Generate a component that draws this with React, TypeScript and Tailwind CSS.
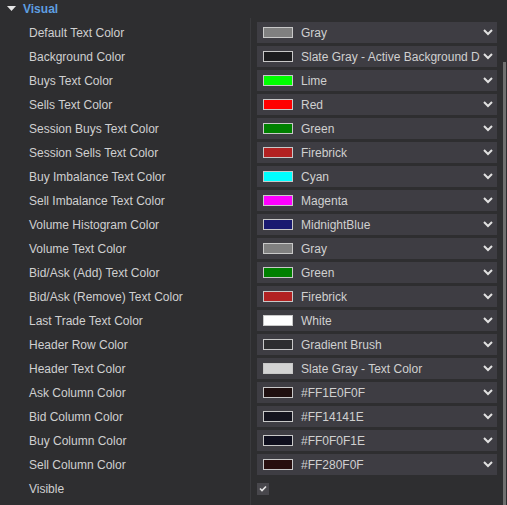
import React from "react";

type Row = { label: string; value: string; swatch: string };

const rows: Row[] = [
  { label: "Default Text Color", value: "Gray", swatch: "#808080" },
  { label: "Background Color", value: "Slate Gray - Active Background D", swatch: "#1c1c1e" },
  { label: "Buys Text Color", value: "Lime", swatch: "#00ff00" },
  { label: "Sells Text Color", value: "Red", swatch: "#ff0000" },
  { label: "Session Buys Text Color", value: "Green", swatch: "#008000" },
  { label: "Session Sells Text Color", value: "Firebrick", swatch: "#b22222" },
  { label: "Buy Imbalance Text Color", value: "Cyan", swatch: "#00ffff" },
  { label: "Sell Imbalance Text Color", value: "Magenta", swatch: "#ff00ff" },
  { label: "Volume Histogram Color", value: "MidnightBlue", swatch: "#191970" },
  { label: "Volume Text Color", value: "Gray", swatch: "#808080" },
  { label: "Bid/Ask (Add) Text Color", value: "Green", swatch: "#008000" },
  { label: "Bid/Ask (Remove) Text Color", value: "Firebrick", swatch: "#b22222" },
  { label: "Last Trade Text Color", value: "White", swatch: "#ffffff" },
  { label: "Header Row Color", value: "Gradient Brush", swatch: "#2e2e30" },
  { label: "Header Text Color", value: "Slate Gray - Text Color", swatch: "#d3d3d3" },
  { label: "Ask Column Color", value: "#FF1E0F0F", swatch: "#1e0f0f" },
  { label: "Bid Column Color", value: "#FF14141E", swatch: "#14141e" },
  { label: "Buy Column Color", value: "#FF0F0F1E", swatch: "#0f0f1e" },
  { label: "Sell Column Color", value: "#FF280F0F", swatch: "#280f0f" },
];

function Chevron() {
  return (
    <svg width="10" height="7" viewBox="0 0 10 7" className="absolute right-[4px] top-[7px]">
      <polyline points="1,1 5,5 9,1" fill="none" stroke="#e0e0e0" strokeWidth="2" />
    </svg>
  );
}

export default function App() {
  return (
    <div
      className="relative w-[507px] h-[505px] overflow-hidden bg-[#2e2e30] text-[12px] text-[#d0d0d0]"
      style={{ fontFamily: '"Liberation Sans", Arial, sans-serif' }}
    >
      <div className="h-[17px] flex items-center">
        <svg width="9" height="6" viewBox="0 0 9 6" className="ml-[7px] mr-[7px]">
          <polygon points="0,0 9,0 4.5,5" fill="#e6e6e6" />
        </svg>
        <span className="font-bold text-[#5e9fe0]">Visual</span>
      </div>
      <div className="flex pt-[3px]">
        <div className="w-[250px] flex flex-col">
          {rows.map((r, i) => (
            <div key={i} className="h-6 flex items-center pt-[2px] pl-[29px] whitespace-nowrap">
              {r.label}
            </div>
          ))}
          <div className="h-6 flex items-center pt-[2px] pl-[29px]">Visible</div>
        </div>
        <div className="w-px bg-[#3a3a3d] -mt-[2px] h-[490px]" />
        <div className="w-[240px] ml-[6px] flex flex-col">
          {rows.map((r, i) => (
            <div key={i} className="h-6 pt-[2px]">
              <div className="relative h-[21px] bg-[#3e3d43] flex items-center pr-[14px]">
                <div
                  className="ml-[6px] w-[30px] h-[11px] border border-[#c8c8c8] shrink-0"
                  style={{ backgroundColor: r.swatch }}
                />
                <span className="ml-[8px] whitespace-nowrap pt-px">{r.value}</span>
                <Chevron />
              </div>
            </div>
          ))}
          <div className="h-6 flex items-center pt-[1px]">
            <div className="w-[12px] h-[12px] bg-[#48474c] flex items-center justify-center">
              <svg width="8" height="7" viewBox="0 0 8 7">
                <polyline points="1,3.5 3,5.5 7,1.5" fill="none" stroke="#e6e6e6" strokeWidth="1.6" />
              </svg>
            </div>
          </div>
        </div>
        <div className="flex-1 flex justify-end pr-[1px]">
          <div className="w-[3px] mt-[42px] h-[500px] bg-[#707070]" />
        </div>
      </div>
    </div>
  );
}
